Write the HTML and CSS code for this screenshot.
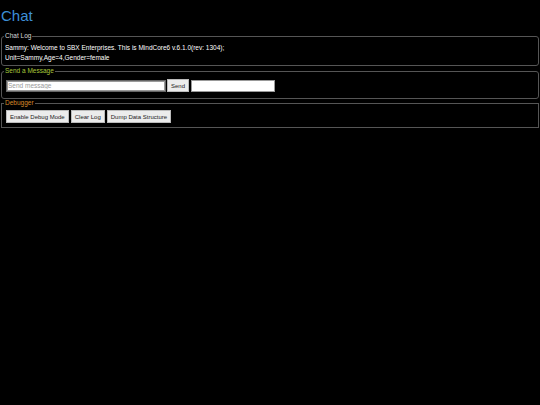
FILE: index.html
```html
<!DOCTYPE html>
<html>
<head>
<meta charset="utf-8">
<title>Chat</title>
<link rel="stylesheet" href="styles.css">
</head>
<body>
<h1 class="title">Chat</h1>
<fieldset class="box box-log">
  <legend class="legend legend-log">Chat Log</legend>
  <div class="log">
    <div class="log-line">Sammy: Welcome to SBX Enterprises. This is MindCore6 v.6.1.0(rev: 1304);</div>
    <div class="log-line">Unit=Sammy,Age=4,Gender=female</div>
  </div>
</fieldset>
<fieldset class="box box-send">
  <legend class="legend legend-send">Send a Message</legend>
  <div class="row row-send">
    <input class="field field-msg" type="text" placeholder="Send message">
    <button class="btn btn-send">Send</button>
    <input class="field field-extra" type="text">
  </div>
</fieldset>
<fieldset class="box box-debug">
  <legend class="legend legend-debug">Debugger</legend>
  <div class="row">
    <button class="btn">Enable Debug Mode</button>
    <button class="btn">Clear Log</button>
    <button class="btn">Dump Data Structure</button>
  </div>
</fieldset>
</body>
</html>
```
FILE: styles.css
```css
html, body {
  background: #000;
}
body {
  margin: 0;
  padding: 0 1px;
  font-family: "Liberation Sans", Arial, sans-serif;
  font-size: 6.5px;
  color: #fff;
}
.title {
  margin: 0;
  padding-top: 7px;
  height: 32px;
  box-sizing: border-box;
  font-size: 15px;
  font-weight: normal;
  color: #3d8fd6;
  line-height: 18px;
}
.box {
  margin: 0 0 1px 0;
  padding: 3px 3px 3px 3px;
  border: 1px solid #555;
  border-radius: 3px;
  min-width: 0;
}
.box-send {
  padding: 4px 3px 6px 3px;
  margin-bottom: 0;
}
.box-debug {
  padding: 3px 3px 4px 3px;
  border-radius: 0;
}
.legend {
  padding: 0 1px;
  margin-left: -1px;
  font-size: 6.5px;
  line-height: 8px;
}
.legend-log { color: #d8d8d8; }
.legend-send { color: #a8c83a; }
.legend-debug { color: #d88a28; }
.log-line {
  line-height: 9.5px;
}
.row {
  display: flex;
  align-items: center;
  gap: 2px;
  margin-left: 1px;
}
.row-send {
  gap: 1px;
}
.field {
  height: 12px;
  box-sizing: border-box;
  border: 1px solid #999;
  background: #fff;
  font-family: "Liberation Sans", Arial, sans-serif;
  font-size: 6.5px;
  padding: 0 1px;
  margin: 0;
  outline: none;
}
.field::placeholder { color: #999; }
.field-msg {
  width: 160px;
  border: 1px solid #666;
  box-shadow: inset 0 0 0 1px #9a9a9a;
}
.field-extra { width: 84px; margin-left: 1px; }
.btn {
  height: 13px;
  box-sizing: border-box;
  margin: 0;
  padding: 0 3px;
  font-family: "Liberation Sans", Arial, sans-serif;
  font-size: 6px;
  background: #ececec;
  border: 1px solid #bbb;
  border-radius: 0;
  color: #222;
}
.btn-send { width: 22px; padding: 0; }
```
